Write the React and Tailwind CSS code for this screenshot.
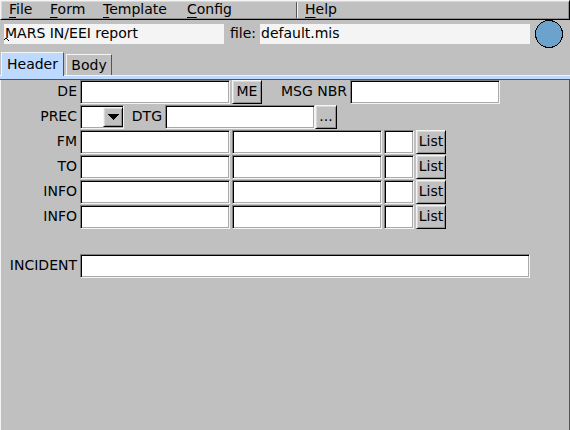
import React, { useState } from "react";

const down =
  "h-6 bg-white border border-t-[#808080] border-l-[#808080] border-b-[#f4f4f4] border-r-[#f4f4f4] shadow-[inset_1px_1px_0_#000,inset_-1px_-1px_0_#aaaaaa] px-1 outline-none rounded-none";
const up =
  "bg-[#c0c0c0] border border-t-[#f4f4f4] border-l-[#f4f4f4] border-b-black border-r-black shadow-[inset_1px_1px_0_#d8d8d8,inset_-1px_-1px_0_#909090]";

function Field({ label, width }) {
  return <input type="text" aria-label={label} className={`${down} ${width}`} />;
}

function Button({ children, width, label }) {
  return (
    <button type="button" aria-label={label} className={`${up} ${width} h-6 pb-0.5 text-center leading-5`}>
      {children}
    </button>
  );
}

function Row({ label, id, children }) {
  return (
    <div className="flex h-6 items-center">
      <label htmlFor={id} className="w-[79px] shrink-0 pr-[3px] pb-0.5 text-right">
        {label}
      </label>
      {children}
    </div>
  );
}

function AddressRow({ label, id }) {
  return (
    <Row label={label} id={id}>
      <div className="flex gap-0.5">
        <input id={id} type="text" className={`${down} w-[150px]`} />
        <Field label={`${label} name`} width="w-[150px]" />
        <Field label={`${label} zone`} width="w-[30px]" />
        <Button width="w-[30px]">List</Button>
      </div>
    </Row>
  );
}

function MenuItem({ children, className }) {
  return (
    <button type="button" className={`pb-0.5 text-left leading-4 ${className}`}>
      <span className="underline decoration-1 underline-offset-3">{children[0]}</span>
      {children.slice(1)}
    </button>
  );
}

function HeaderForm() {
  return (
    <div className="flex flex-col gap-px">
      <Row label="DE" id="de">
        <input id="de" type="text" className={`${down} w-[150px]`} />
        <div className="ml-0.5 flex">
          <Button width="w-[30px]">ME</Button>
        </div>
        <label htmlFor="msg" className="w-[88px] pr-[3px] pb-0.5 text-right">
          MSG NBR
        </label>
        <input id="msg" type="text" className={`${down} w-[150px]`} />
      </Row>
      <Row label="PREC" id="prec">
        <div className="relative h-6 w-11">
          <select id="prec" className={`${down} w-full appearance-none`}>
            <option></option>
            <option>R</option>
            <option>P</option>
            <option>O</option>
          </select>
          <span className={`${up} pointer-events-none absolute top-0.5 right-px flex h-5 w-5 items-center justify-center`}>
            <svg width="12" height="6" viewBox="0 0 12 6" shapeRendering="crispEdges" aria-hidden="true">
              <path d="M0 0H12L6 6Z" />
            </svg>
          </span>
        </div>
        <label htmlFor="dtg" className="w-[41px] pr-[3px] pb-0.5 text-right">
          DTG
        </label>
        <input id="dtg" type="text" className={`${down} w-[150px]`} />
        <Button width="w-[22px]" label="Set date and time">
          ...
        </Button>
      </Row>
      <AddressRow label="FM" id="fm" />
      <AddressRow label="TO" id="to" />
      <AddressRow label="INFO" id="info1" />
      <AddressRow label="INFO" id="info2" />
      <div className="pt-6">
        <Row label="INCIDENT" id="incident">
          <input id="incident" type="text" className={`${down} w-[450px]`} />
        </Row>
      </div>
    </div>
  );
}

function Tab({ name, active, onSelect, width }) {
  return (
    <button
      type="button"
      role="tab"
      aria-selected={active}
      onClick={onSelect}
      className={`${width} border-t border-l border-r border-t-[#f4f4f4] border-l-[#f4f4f4] border-r-[#555555] text-center ${
        active ? "relative z-10 -mb-px h-6 bg-[#bdd9ff] pb-0.5" : "h-[21px] bg-[#c0c0c0]"
      }`}
    >
      {name}
    </button>
  );
}

export default function App() {
  const [tab, setTab] = useState("Header");
  return (
    <div className="flex min-h-screen flex-col bg-[#c0c0c0] font-['DejaVu_Sans',sans-serif] text-[14px] leading-5 text-black">
      <nav className={`${up} flex h-5 items-center`}>
        <MenuItem className="ml-2 w-[41px]">File</MenuItem>
        <MenuItem className="w-[53px]">Form</MenuItem>
        <MenuItem className="w-[84px]">Template</MenuItem>
        <MenuItem className="w-[109px]">Config</MenuItem>
        <span className="h-4 w-0.5 border-r border-l border-r-[#f4f4f4] border-l-[#555555]" />
        <MenuItem className="ml-[7px]">Help</MenuItem>
      </nav>
      <div className="flex h-7 items-center pr-[7px] pl-1">
        <div className="relative">
          <input
            type="text"
            aria-label="Report type"
            readOnly
            value="MARS IN/EEI report"
            className="block h-5 w-[220px] bg-[#f4f4f4] px-px pb-0.5 outline-none"
          />
          <svg className="pointer-events-none absolute bottom-0.5 left-0" width="5" height="5" viewBox="0 0 5 5" shapeRendering="crispEdges" aria-hidden="true">
            <path d="M0 2h1v1h-1zM1 1h1v1h-1zM2 1h1v1h-1zM3 2h1v1h-1zM4 3h1v1h-1z" />
          </svg>
        </div>
        <label htmlFor="file" className="w-9 pr-1 pb-0.5 text-right">
          file:
        </label>
        <input
          id="file"
          type="text"
          readOnly
          value="default.mis"
          className="h-5 min-w-0 flex-1 bg-[#f4f4f4] px-px pb-0.5 outline-none"
        />
        <svg className="ml-[5px] h-7 w-7 shrink-0" viewBox="0 0 28 28" shapeRendering="crispEdges" aria-hidden="true">
          <circle cx="14" cy="14" r="13.5" fill="#6ba3cc" stroke="#000" />
        </svg>
      </div>
      <div role="tablist" className="flex items-end gap-0.5 pt-1 pl-px">
        <Tab name="Header" width="w-[63px]" active={tab === "Header"} onSelect={() => setTab("Header")} />
        <Tab name="Body" width="w-[46px]" active={tab === "Body"} onSelect={() => setTab("Body")} />
      </div>
      <div className="h-[5px] border-t border-b border-t-[#f4f4f4] border-b-[#555555] bg-[#bdd9ff]" />
      <main className="flex-1 border-r border-l border-r-[#555555] border-l-[#f4f4f4]">
        {tab === "Header" && <HeaderForm />}
      </main>
    </div>
  );
}
